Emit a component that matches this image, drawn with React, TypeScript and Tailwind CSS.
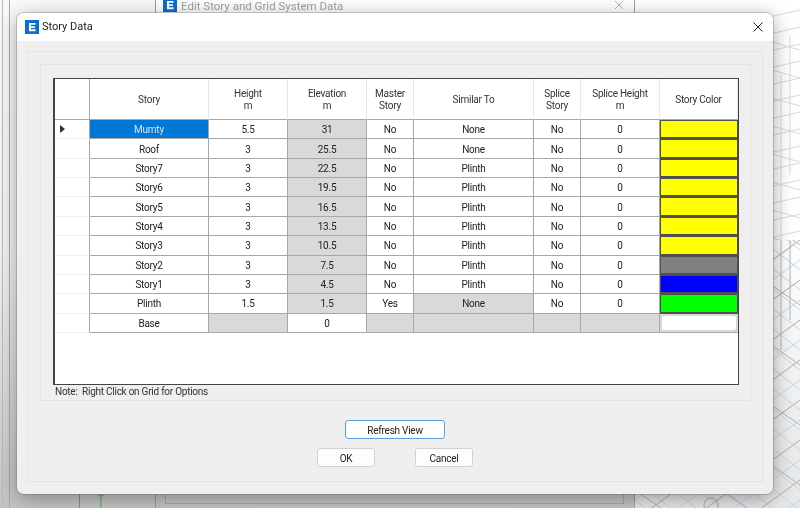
import React from "react";

const FONT = "font-['Roboto','Liberation_Sans',Arial,sans-serif]";

type Row = { name: string; h: string; e: string; m: string; s: string; color: string };
const rows: Row[] = [
  { name: "Mumty", h: "5.5", e: "31", m: "No", s: "None", color: "bg-[#ffff00]" },
  { name: "Roof", h: "3", e: "25.5", m: "No", s: "None", color: "bg-[#ffff00]" },
  { name: "Story7", h: "3", e: "22.5", m: "No", s: "Plinth", color: "bg-[#ffff00]" },
  { name: "Story6", h: "3", e: "19.5", m: "No", s: "Plinth", color: "bg-[#ffff00]" },
  { name: "Story5", h: "3", e: "16.5", m: "No", s: "Plinth", color: "bg-[#ffff00]" },
  { name: "Story4", h: "3", e: "13.5", m: "No", s: "Plinth", color: "bg-[#ffff00]" },
  { name: "Story3", h: "3", e: "10.5", m: "No", s: "Plinth", color: "bg-[#ffff00]" },
  { name: "Story2", h: "3", e: "7.5", m: "No", s: "Plinth", color: "bg-[#808080]" },
  { name: "Story1", h: "3", e: "4.5", m: "No", s: "Plinth", color: "bg-[#0000ff]" },
  { name: "Plinth", h: "1.5", e: "1.5", m: "Yes", s: "None", color: "bg-[#00ff00]" },
];

function Cell({ children, gray, blue }: { children?: React.ReactNode; gray?: boolean; blue?: boolean }) {
  const bg = blue ? "bg-[#0078d7] text-[#cfe4f7]" : gray ? "bg-[#d9d9d9]" : "bg-white";
  return (
    <div className={`flex items-center justify-center border-r border-b border-[#a8a8a8] pt-[1px] ${bg}`}>{children}</div>
  );
}

function Head({ lines }: { lines: string[] }) {
  return (
    <div className="flex flex-col items-center justify-center border-r border-b border-r-[#e6e6e6] border-b-[#a8a8a8] bg-white pt-[1px] leading-[12px] text-[#333]">
      {lines.map((l) => (
        <span key={l}>{l}</span>
      ))}
    </div>
  );
}

function Logo({ size }: { size: number }) {
  return (
    <svg width={size} height={size} viewBox="0 0 14 14" className="shrink-0">
      <rect width="14" height="14" fill="#0a6fd0" />
      <path d="M4 3h6.5v1.8H6v1.4h4v1.7H6v1.4h4.6V11.2H4z" fill="#fff" />
    </svg>
  );
}

function Backdrop() {
  const topShallow = Array.from({ length: 14 }, (_, i) => 18 + i * 17);
  const topDown = Array.from({ length: 8 }, (_, i) => 40 + i * 28);
  const low = Array.from({ length: 36 }, (_, i) => -240 + i * 20);
  return (
    <>
      {/* main application window */}
      <div className="absolute left-0 top-0 h-full w-[636px] bg-gradient-to-b from-[#fafafa] via-[#f2f2f2] to-[#c4c4c4]" />
      <div className="absolute left-[2px] top-0 h-full w-[1px] bg-[#b9b9b9]" />
      <div className="absolute left-[9px] top-0 h-full w-[1px] bg-[#a9a9a9]" />
      <div className="absolute left-[79px] top-[480px] h-[28px] w-[1px] bg-[#8c8c8c]" />
      <div className="absolute left-[155px] top-0 h-full w-[1px] bg-[#9a9a9a]" />
      <div className="absolute left-[165px] top-[480px] h-[24px] w-[459px] border border-[#a8a8a8]" />
      <div className="absolute left-[634px] top-0 h-full w-[1px] bg-[#a0a0a0]" />
      {/* green axis arrow */}
      <svg className="absolute left-[96px] top-[492px]" width="10" height="16" viewBox="0 0 10 16">
        <path d="M5 2v14M2 4l3-2 3 2" fill="none" stroke="#39b54a" strokeWidth="1" />
      </svg>
      {/* editor window title */}
      <div className="absolute left-[156px] top-0 flex h-[13px] w-[478px] items-start bg-white">
        <div className="ml-[7px] -mt-[2px] flex items-start gap-[4px]">
          <Logo size={14} />
          <span className="mt-[2px] text-[11.5px] leading-[12px] text-[#a0a0a0]">Edit Story and Grid System Data</span>
        </div>
      </div>
      <svg className="absolute left-[614px] top-0" width="10" height="10" viewBox="0 0 10 10">
        <path d="M1 1l8 8M9 1l-8 8" stroke="#b0b0b0" strokeWidth="1" />
      </svg>
      {/* 3D model view */}
      <svg className="absolute left-[635px] top-0" width="165" height="508" viewBox="0 0 165 508">
        <defs>
          <linearGradient id="fade" x1="0" y1="0" x2="0" y2="1">
            <stop offset="0" stopColor="#ffffff" />
            <stop offset="0.45" stopColor="#f3f3f3" />
            <stop offset="1" stopColor="#e6e6e6" />
          </linearGradient>
        </defs>
        <rect width="165" height="508" fill="#ffffff" />
        <g stroke="#d8d8d8" strokeWidth="1">
          {topShallow.map((y) => (
            <line key={`a${y}`} x1="130" y1={y} x2="165" y2={y - 8} />
          ))}
          {topDown.map((y) => (
            <line key={`b${y}`} x1="130" y1={y} x2="165" y2={y + 10} />
          ))}
          <line x1="146" y1="75" x2="146" y2="240" />
          <line x1="155" y1="35" x2="155" y2="175" />
        </g>
        <svg x="0" y="240" width="165" height="268" viewBox="0 0 165 268">
          <rect width="165" height="268" fill="url(#fade)" />
          <g stroke="#bcd7ef" strokeWidth="1">
            {low.map((v) => (
              <line key={`c${v}`} x1="0" y1={v} x2="165" y2={v + 130} />
            ))}
            {low.map((v) => (
              <line key={`d${v}`} x1="0" y1={v + 200} x2="165" y2={v + 80} />
            ))}
          </g>
          <g stroke="#b4b4b4" strokeWidth="1">
            {low.map((v, i) =>
              i % 2 ? <line key={`e${v}`} x1="0" y1={v + 220} x2="165" y2={v + 100} /> : null,
            )}
            {low.map((v, i) =>
              i % 3 ? null : <line key={`f${v}`} x1="0" y1={v + 10} x2="165" y2={v + 125} />,
            )}
            <line x1="146" y1="0" x2="146" y2="110" />
            <line x1="155" y1="0" x2="155" y2="80" />
          </g>
          <circle cx="76" cy="265" r="7" fill="none" stroke="#a8a8a8" />
        </svg>
      </svg>
    </>
  );
}

export default function App() {
  return (
    <div className={`relative h-[508px] w-[800px] overflow-hidden blur-[0.35px] ${FONT}`}>
      <Backdrop />

      {/* Story Data dialog */}
      <div className="absolute left-[17px] top-[13px] flex h-[481px] w-[756px] flex-col overflow-hidden rounded-[7px] bg-[#efefef] shadow-[0_4px_20px_rgba(0,0,0,0.36),0_0_0_1px_rgba(150,150,150,0.4)]">
        <div className="flex h-[28px] shrink-0 items-center bg-white pl-[8px] pr-[10px]">
          <Logo size={14} />
          <span className="ml-[3px] mt-[1px] text-[11px] text-[#222]">Story Data</span>
          <svg className="ml-auto" width="10" height="10" viewBox="0 0 10 10">
            <path d="M0.5 0.5l9 9M9.5 0.5l-9 9" stroke="#222" strokeWidth="1" />
          </svg>
        </div>

        <div className="flex-1 pl-[10px] pt-[10px]">
          <div className="flex h-[431px] w-[736px] flex-col items-center border border-[#e4e4e4] pt-[12px] tracking-[-0.25px]">
            <div className="ml-[12px] h-[337px] w-[711px] self-start border border-[#e4e4e4] pl-[12px] pt-[13px]">
              <div className="grid h-[307px] w-[686px] grid-cols-[35px_119px_79px_79px_47px_120px_47px_79px_78px] grid-rows-[41px_repeat(11,19.36px)] content-start border-b border-l-2 border-r border-t border-[#444] bg-white text-[10px] text-[#222]">
                <div className="border-b border-r border-b-[#a8a8a8] border-r-[#a8a8a8] bg-white" />
                <Head lines={["Story"]} />
                <Head lines={["Height", "m"]} />
                <Head lines={["Elevation", "m"]} />
                <Head lines={["Master", "Story"]} />
                <Head lines={["Similar To"]} />
                <Head lines={["Splice", "Story"]} />
                <Head lines={["Splice Height", "m"]} />
                <Head lines={["Story Color"]} />

                {rows.map((r, i) => (
                  <React.Fragment key={r.name}>
                    <div className="flex items-center border-b border-r border-b-[#eeeeee] border-r-[#a8a8a8] bg-white pl-[5px]">
                      {i === 0 && (
                        <svg width="5" height="8" viewBox="0 0 5 8">
                          <path d="M0 0l5 4-5 4z" fill="#333" />
                        </svg>
                      )}
                    </div>
                    <Cell blue={i === 0}>{r.name}</Cell>
                    <Cell>{r.h}</Cell>
                    <Cell gray>{r.e}</Cell>
                    <Cell>{r.m}</Cell>
                    <Cell gray={r.name === "Plinth"}>{r.s}</Cell>
                    <Cell>No</Cell>
                    <Cell>0</Cell>
                    <div className={`border border-b-2 border-[#505050] ${r.color}`} />
                  </React.Fragment>
                ))}

                <div className="border-b border-r border-b-[#eeeeee] border-r-[#a8a8a8] bg-white" />
                <Cell>Base</Cell>
                <Cell gray />
                <Cell>0</Cell>
                <Cell gray />
                <Cell gray />
                <Cell gray />
                <Cell gray />
                <div className="border-b border-[#a8a8a8] bg-[#d9d9d9] p-[2px]">
                  <div className="h-full rounded-[2px] bg-white" />
                </div>
              </div>
              <div className="pl-[2px] pt-[1px] text-[10px] leading-[12px] text-[#333]">
                Note:&nbsp; Right Click on Grid for Options
              </div>
            </div>

            <button className="mt-[19px] h-[19px] w-[100px] rounded-[3px] border-[1.5px] border-[#5a9fd8] bg-white pt-[1px] text-[10px] text-[#222]">
              Refresh View
            </button>
            <div className="mt-[9px] flex gap-[40px]">
              <button className="h-[19px] w-[58px] rounded-[3px] border border-[#d2d2d2] bg-[#fdfdfd] pt-[1px] text-[10px] text-[#222]">
                OK
              </button>
              <button className="h-[19px] w-[58px] rounded-[3px] border border-[#d2d2d2] bg-[#fdfdfd] pt-[1px] text-[10px] text-[#222]">
                Cancel
              </button>
            </div>
          </div>
        </div>
      </div>
    </div>
  );
}
